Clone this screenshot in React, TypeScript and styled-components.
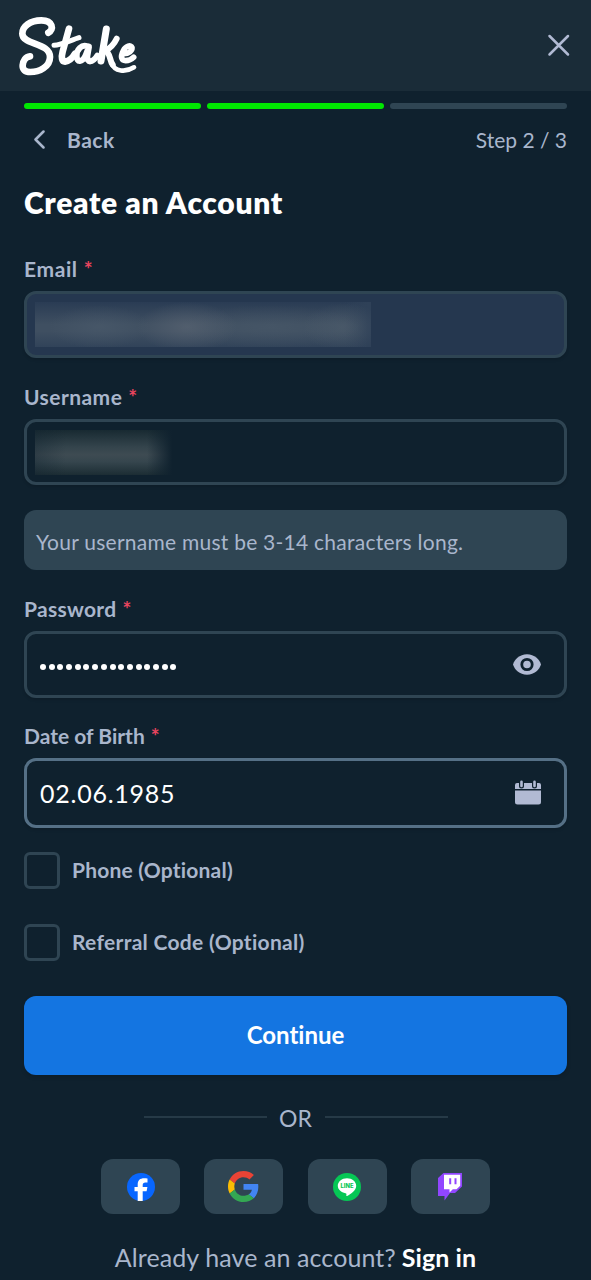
import React from 'react';
import styled, { createGlobalStyle } from 'styled-components';

const c = {
  bg: '#0f212e',
  header: '#1a2c38',
  panel: '#2f4553',
  text: '#b1bad3',
  label: '#a9b6cc',
  green: '#00e701',
  blue: '#1475e1',
  focus: '#557086',
  red: '#e9455f',
};

const Global = createGlobalStyle`
  * { box-sizing: border-box; }
  body { margin: 0; background: ${c.bg}; font-family: Lato, "Liberation Sans", sans-serif; font-variant-ligatures: none; color: ${c.label}; }
  button, input { font: inherit; }
`;

const Page = styled.div`
  width: 591px;
  height: 1280px;
  overflow: hidden;
  background: ${c.bg};
`;

const Header = styled.header`
  height: 91px;
  padding: 0 19px 0 18px;
  display: flex;
  align-items: center;
  justify-content: space-between;
  background: ${c.header};
`;

const IconButton = styled.button`
  display: flex;
  padding: 0;
  border: 0;
  background: none;
  color: ${c.text};
`;

const Content = styled.main`
  display: flex;
  flex-direction: column;
  padding: 12px 24px 0;
`;

const Progress = styled.div`
  display: grid;
  grid-template-columns: repeat(3, 1fr);
  gap: 6px;
`;

const Segment = styled.div<{ $done?: boolean }>`
  height: 6px;
  border-radius: 3px;
  background: ${(p) => (p.$done ? c.green : c.panel)};
`;

const StepRow = styled.div`
  display: flex;
  align-items: center;
  justify-content: space-between;
  height: 30px;
  margin-top: 15px;
  font-size: 21px;
`;

const Back = styled.button`
  display: flex;
  align-items: center;
  gap: 20px;
  padding: 0 0 0 9px;
  border: 0;
  background: none;
  color: ${c.label};
  font-size: 21px;
  font-weight: 700;
  letter-spacing: 0.5px;
`;

const Title = styled.h1`
  margin: 30px 0 0;
  height: 37px;
  line-height: 36px;
  font-size: 30px;
  font-weight: 800;
  letter-spacing: 0.65px;
  color: #fff;
`;

const Label = styled.label<{ $top: number; $ls: number }>`
  display: flex;
  height: 26px;
  margin-top: ${(p) => p.$top}px;
  margin-bottom: 9px;
  line-height: 26px;
  font-size: 21px;
  font-weight: 700;
  letter-spacing: ${(p) => p.$ls}px;
`;

const Star = styled.span`
  margin-left: 6px;
  color: ${c.red};
`;

const Field = styled.div<{ $h?: number; $filled?: boolean; $focus?: boolean }>`
  display: flex;
  align-items: center;
  justify-content: space-between;
  height: ${(p) => p.$h ?? 67}px;
  padding: 0 23px 0 13px;
  border: 3px solid ${(p) => (p.$focus ? c.focus : c.panel)};
  border-radius: 12px;
  background: ${(p) => (p.$filled ? '#25374f' : c.bg)};
  box-shadow: 0 2px 3px rgba(0, 0, 0, 0.12);
  color: #fff;
`;

const Redacted = styled.div<{ $w: number; $tone: 'blue' | 'dark' }>`
  width: ${(p) => p.$w}px;
  height: 45px;
  margin-left: -5px;
  overflow: hidden;
  background: ${(p) =>
    p.$tone === 'blue'
      ? `radial-gradient(ellipse 50px 25px at 152px 25px, #5a6573aa, transparent),
         radial-gradient(ellipse 50px 22px at 65px 25px, #4b5b6c99, transparent),
         radial-gradient(ellipse 40px 24px at 308px 25px, #4f5e6d88, transparent),
         radial-gradient(ellipse 90px 22px at 235px 25px, #4a5a6a88, transparent),
         linear-gradient(90deg, transparent 92%, #2f4158 99%),
         linear-gradient(#2a3c54, #3f4f61 50%, #3f4f61 65%, #314359)`
      : `linear-gradient(90deg, ${c.bg}55, transparent 22%, transparent 80%, ${c.bg} 98%),
         linear-gradient(#182a32, #34444c 38%, #3e4b52 55%, #36464e 70%, #1c2d34)`};
`;

const Dots = styled.div`
  display: flex;
  gap: 2.7px;
  margin-top: 4px;
`;

const Dot = styled.span`
  width: 6px;
  height: 6px;
  border-radius: 50%;
  background: #fff;
`;

const DateText = styled.span`
  font-size: 25px;
  letter-spacing: 0.75px;
`;

const Hint = styled.div`
  height: 60px;
  margin-top: 25px;
  padding: 2px 12px 0;
  line-height: 60px;
  border-radius: 12px;
  background: ${c.panel};
  font-size: 21px;
  letter-spacing: 0.25px;
  white-space: nowrap;
`;

const CheckRow = styled.label<{ $top: number; $ls: number }>`
  display: flex;
  align-items: center;
  gap: 12px;
  height: 37px;
  margin-top: ${(p) => p.$top}px;
  font-size: 21px;
  font-weight: 700;
  letter-spacing: ${(p) => p.$ls}px;
`;

const CheckText = styled.span`
  padding-bottom: 2px;
`;

const Box = styled.span`
  width: 36px;
  height: 37px;
  border: 3px solid ${c.panel};
  border-radius: 6px;
`;

const Continue = styled.button`
  height: 79px;
  margin-top: 35px;
  padding: 0 0 2px;
  border: 0;
  border-radius: 12px;
  background: ${c.blue};
  color: #fff;
  font-size: 24px;
  font-weight: 700;
  box-shadow: 0 2px 4px rgba(0, 0, 0, 0.15);
`;

const Divider = styled.div`
  display: flex;
  align-items: center;
  justify-content: center;
  gap: 12px;
  height: 30px;
  margin-top: 28px;
  font-size: 23px;
`;

const Rule = styled.span`
  width: 123px;
  height: 2px;
  margin-bottom: 2px;
  background: #263a47;
`;

const OrText = styled.span`
  width: 34px;
  text-align: center;
  white-space: nowrap;
`;

const Socials = styled.div`
  display: flex;
  justify-content: center;
  gap: 24.1px;
  margin-top: 26px;
`;

const Social = styled.button`
  display: flex;
  align-items: center;
  justify-content: center;
  width: 79px;
  height: 55px;
  padding: 0;
  border: 0;
  border-radius: 12px;
  background: ${c.panel};
`;

const Footer = styled.p`
  display: flex;
  justify-content: center;
  gap: 6px;
  margin: 27px 0 0;
  line-height: 32px;
  font-size: 25px;
  letter-spacing: 0.1px;
  white-space: nowrap;
`;

const SignIn = styled.a`
  color: #fff;
  font-weight: 700;
`;

const Logo = () => (
  <svg width="120" height="62" viewBox="54 42 360 186" fill="none" stroke="#fff" strokeLinecap="round" strokeLinejoin="round" role="img" aria-label="Stake">
    <path strokeWidth="20" d="M145 95C163 86 159 58 124 58C91 58 67 76 67 98C67 132 150 124 150 168C150 198 117 213 91 213C75 213 67 205 68 193C69 179 77 167 90 166" />
    <path strokeWidth="20" d="M207 83L188 152C183 171 186 182 195 182C207 181 218 170 225 158" />
    <path strokeWidth="15" d="M162 133C184 132 214 117 237 110" />
    <path strokeWidth="18" d="M262 136C245 129 230 146 230 164C230 187 247 184 257 163L267 137L262 166C261 187 277 186 292 164" />
    <path strokeWidth="21" d="M319 84L303 180" />
    <path strokeWidth="18" d="M350 113C342 130 329 142 316 149C332 156 328 178 338 191" />
    <path strokeWidth="14" d="M334 184C343 214 378 214 402 199" />
    <path strokeWidth="17" d="M369 158C386 159 397 149 396 140C393 130 377 135 370 149C360 168 365 179 377 179C386 179 395 175 401 169" />
  </svg>
);

const CloseIcon = () => (
  <svg width="26" height="26" viewBox="0 0 26 26" fill="none" stroke="currentColor" strokeWidth="2.5" strokeLinecap="round">
    <path d="M3.500 3L22 21.500M22 3L3.500 21.500" />
  </svg>
);

const BackIcon = () => (
  <svg width="14" height="20" viewBox="0 0 14 20" fill="none" stroke="currentColor" strokeWidth="2.5" strokeLinecap="round" strokeLinejoin="round">
    <path d="M10.500 2.500L2.500 10.500L10.500 18.500" />
  </svg>
);

const EyeIcon = () => (
  <svg width="28" height="22" viewBox="0 0 28 22">
    <path fill={c.text} d="M14 0.300C6.500 0.300 1.500 5.500 0 10.500C1.500 15.500 6.500 20.700 14 20.700S26.500 15.500 28 10.500C26.500 5.500 21.500 0.300 14 0.300Z" />
    <circle cx="14" cy="10.500" r="5.200" fill={c.text} stroke={c.bg} strokeWidth="2.800" />
  </svg>
);

const CalendarIcon = () => (
  <svg width="26" height="26" viewBox="0 0 26 26">
    <path fill={c.text} d="M2 3H24Q26 3 26 5V9H0V5Q0 3 2 3ZM0 10.500H26V22Q26 24.500 23.500 24.500H2.500Q0 24.500 0 22Z" />
    <path d="M6.500 2.500V6M19.500 2.500V6" stroke={c.bg} strokeWidth="5" strokeLinecap="round" />
    <path d="M6.500 1.800V6M19.500 1.800V6" stroke={c.text} strokeWidth="2.600" strokeLinecap="round" />
  </svg>
);

const FacebookIcon = () => (
  <svg width="28" height="28" viewBox="0 0 28 28">
    <circle cx="14" cy="14" r="14" fill="#0866ff" />
    <path fill="#fff" d="M10.700 28V18.300H7.500V14H10.700V11.500C10.700 7.200 13 5.200 17.200 5.200C18.700 5.200 20 5.400 20.500 5.500V9.400H18.400C16.500 9.400 15.700 10.300 15.700 11.900V14H20.400L19.600 18.300H15.700V28Q13.500 28.300 10.700 28Z" />
  </svg>
);

const GoogleIcon = () => (
  <svg width="31" height="31" viewBox="0 0 48 48">
    <path fill="#ea4335" d="M24 9.500c3.540 0 6.710 1.220 9.210 3.600l6.850-6.850C35.900 2.380 30.470 0 24 0 14.620 0 6.510 5.380 2.560 13.220l7.980 6.190C12.430 13.720 17.740 9.500 24 9.500z" />
    <path fill="#4285f4" d="M46.980 24.550c0-1.570-.15-3.090-.38-4.550H24v9.020h12.940c-.58 2.960-2.260 5.480-4.780 7.180l7.730 6c4.510-4.180 7.090-10.360 7.090-17.650z" />
    <path fill="#fbbc05" d="M10.530 28.590c-.48-1.450-.76-2.990-.76-4.590s.27-3.140.76-4.590l-7.980-6.190C.92 16.460 0 20.120 0 24s.92 7.540 2.560 10.780l7.970-6.190z" />
    <path fill="#34a853" d="M24 48c6.480 0 11.930-2.130 15.890-5.810l-7.730-6c-2.150 1.450-4.920 2.300-8.160 2.300-6.260 0-11.570-4.220-13.470-9.910l-7.980 6.190C6.510 42.620 14.620 48 24 48z" />
  </svg>
);

const LineIcon = () => (
  <svg width="28" height="28" viewBox="0 0 28 28">
    <circle cx="14" cy="14" r="14" fill="#06c755" />
    <path fill="#fff" d="M14 5.200C8.900 5.200 4.800 8.600 4.800 12.800C4.800 16.500 8.200 19.600 12.500 20.200C13.700 20.400 13.500 21 13.300 22.600C13.300 23.300 14 23.200 14.600 22.800C18 20.900 23.200 17.300 23.200 12.800C23.200 8.600 19.100 5.200 14 5.200Z" />
    <text x="14" y="15.300" textAnchor="middle" fontFamily="Inter, sans-serif" fontWeight="800" fontSize="5.800" textLength="13" lengthAdjust="spacingAndGlyphs" fill="#06c755">LINE</text>
  </svg>
);

const TwitchIcon = () => (
  <svg width="24" height="28" viewBox="0 0 24 28">
    <path fill="#9146ff" d="M5.500 0H24V13.500L17 20H12L6.500 27.500V23H0V5Z" />
    <path fill="#fff" d="M6 1.800H22.200V12.700L18.500 16.200H14.800L11.500 19.500V16.200H6Z" />
    <path fill="#9146ff" d="M11.200 5.300H13.200V11.300H11.200ZM16.500 5.300H18.500V11.300H16.500Z" />
  </svg>
);

export default function App() {
  return (
    <Page>
      <Global />
      <Header>
        <Logo />
        <IconButton aria-label="Close"><CloseIcon /></IconButton>
      </Header>
      <Content>
        <Progress>
          <Segment $done />
          <Segment $done />
          <Segment />
        </Progress>
        <StepRow>
          <Back><BackIcon />Back</Back>
          <span>Step 2 / 3</span>
        </StepRow>
        <Title>Create an Account</Title>

        <Label $top={35} $ls={0.6}>Email<Star>*</Star></Label>
        <Field $filled><Redacted $w={336} $tone="blue" /></Field>

        <Label $top={26} $ls={0.45}>Username<Star>*</Star></Label>
        <Field $h={66}><Redacted $w={140} $tone="dark" /></Field>
        <Hint>Your username must be 3-14 characters long.</Hint>

        <Label $top={26} $ls={0.3}>Password<Star>*</Star></Label>
        <Field>
          <Dots>{Array.from({ length: 16 }, (_, i) => <Dot key={i} />)}</Dots>
          <EyeIcon />
        </Field>

        <Label $top={25} $ls={0}>Date of Birth<Star>*</Star></Label>
        <Field $h={70} $focus>
          <DateText>02.06.1985</DateText>
          <CalendarIcon />
        </Field>

        <CheckRow $top={24} $ls={0.2}><Box /><CheckText>Phone (Optional)</CheckText></CheckRow>
        <CheckRow $top={35} $ls={0.3}><Box /><CheckText>Referral Code (Optional)</CheckText></CheckRow>

        <Continue>Continue</Continue>
        <Divider><Rule /><OrText>OR</OrText><Rule /></Divider>
        <Socials>
          <Social aria-label="Facebook"><FacebookIcon /></Social>
          <Social aria-label="Google"><GoogleIcon /></Social>
          <Social aria-label="Line"><LineIcon /></Social>
          <Social aria-label="Twitch"><TwitchIcon /></Social>
        </Socials>
        <Footer>Already have an account? <SignIn>Sign in</SignIn></Footer>
      </Content>
    </Page>
  );
}
